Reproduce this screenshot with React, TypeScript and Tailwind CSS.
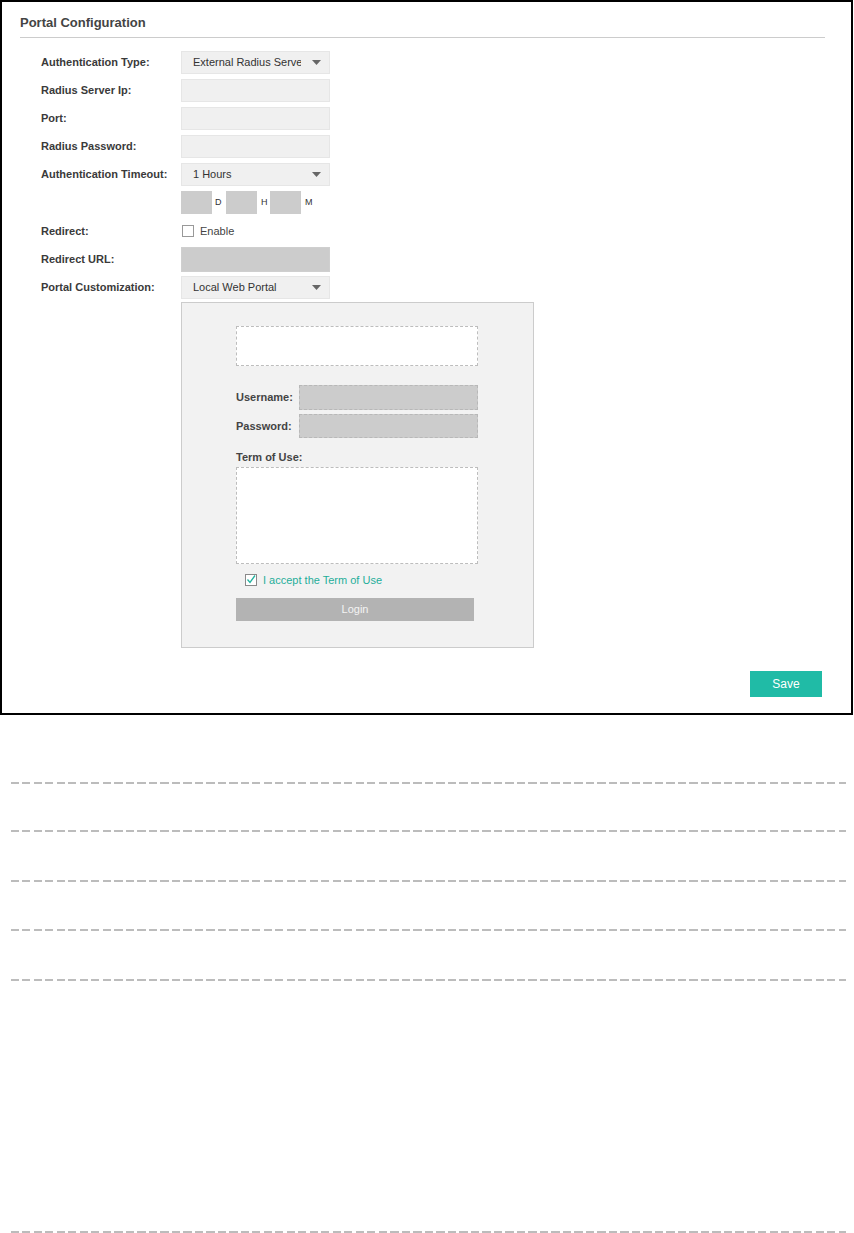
import React from 'react'

const font = { fontFamily: '"Liberation Sans", Arial, sans-serif' }

const Arrow = () => (
  <svg width="9" height="5" viewBox="0 0 9 5" className="shrink-0 ml-auto">
    <path d="M0 0h9L4.5 5z" fill="#666" />
  </svg>
)

const Row = ({ label, children, className = '' }: { label: string; children?: React.ReactNode; className?: string }) => (
  <div className={`flex items-center ${className}`}>
    <div className="w-[140px] text-[11px] font-bold text-[#3a3a3a]">{label}</div>
    {children}
  </div>
)

const Select = ({ value }: { value: string }) => (
  <div className="w-[149px] h-[23px] bg-[#f0f0f0] border border-[#e6e6e6] flex items-center pl-[11px] pr-[8px] text-[11px] text-[#333]">
    <span className="w-[108px] overflow-hidden whitespace-nowrap">{value}</span>
    <Arrow />
  </div>
)

const Input = ({ dark }: { dark?: boolean }) => (
  <div className={`w-[149px] border ${dark ? 'bg-[#cccccc] border-[#cfcfcf] h-[25px]' : 'bg-[#f0f0f0] border-[#e6e6e6] h-[23px]'}`} />
)

const Dashed = ({ className = '' }: { className?: string }) => (
  <div className={`h-[2px] ml-[11px] w-[835px] bg-[repeating-linear-gradient(90deg,#bcbcbc_0_8px,transparent_8px_11.5px)] ${className}`} />
)

export default function App() {
  return (
    <div className="w-[854px] h-[1233px] bg-white" style={font}>
      <div className="w-[853px] h-[715px] border-2 border-black px-[18px] pt-[13px] relative">
        <div className="text-[13px] font-bold text-[#444] leading-[16px] pb-[6px] border-b border-[#cccccc] w-[805px]">Portal Configuration</div>

        <div className="pl-[21px] mt-[13px] flex flex-col">
          <Row label="Authentication Type:"><Select value="External Radius Server" /></Row>
          <Row label="Radius Server Ip:" className="mt-[5px]"><Input /></Row>
          <Row label="Port:" className="mt-[5px]"><Input /></Row>
          <Row label="Radius Password:" className="mt-[5px]"><Input /></Row>
          <Row label="Authentication Timeout:" className="mt-[5px]"><Select value="1 Hours" /></Row>
          <div className="flex items-center mt-[5px] pl-[140px] text-[9px] text-[#333]">
            <div className="w-[31px] h-[23px] bg-[#cccccc]" />
            <span className="w-[14px] pl-[3px]">D</span>
            <div className="w-[31px] h-[23px] bg-[#cccccc]" />
            <span className="w-[13px] pl-[4px]">H</span>
            <div className="w-[31px] h-[23px] bg-[#cccccc]" />
            <span className="pl-[4px]">M</span>
          </div>
          <Row label="Redirect:" className="mt-[10px] h-[14px]">
            <div className="ml-[1px] w-[12px] h-[12px] border border-[#999] bg-white" />
            <span className="ml-[6px] text-[11px] text-[#444]">Enable</span>
          </Row>
          <Row label="Redirect URL:" className="mt-[9px]"><Input dark /></Row>
          <Row label="Portal Customization:" className="mt-[4px]"><Select value="Local Web Portal" /></Row>

          <div className="ml-[140px] mt-[3px] w-[353px] h-[346px] bg-[#f2f2f2] border border-[#cccccc] pl-[54px] pt-[23px]">
            <div className="w-[242px] h-[40px] bg-white border border-dashed border-[#bdbdbd]" />
            <div className="mt-[19px] flex items-center">
              <span className="w-[63px] text-[11px] font-bold text-[#444]">Username:</span>
              <div className="w-[179px] h-[25px] bg-[#cccccc] border border-dashed border-[#b8b8b8]" />
            </div>
            <div className="mt-[4px] flex items-center">
              <span className="w-[63px] text-[11px] font-bold text-[#444]">Password:</span>
              <div className="w-[179px] h-[24px] bg-[#cccccc] border border-dashed border-[#b8b8b8]" />
            </div>
            <div className="mt-[13px] text-[11px] font-bold text-[#444] leading-[13px]">Term of Use:</div>
            <div className="mt-[3px] w-[242px] h-[97px] bg-white border border-dashed border-[#bdbdbd]" />
            <div className="mt-[8px] ml-[9px] flex items-center">
              <svg width="12" height="12" viewBox="0 0 12 12">
                <rect x="0.5" y="0.5" width="11" height="11" fill="white" stroke="#8a8a8a" />
                <path d="M2.5 5.5l2.5 3L10 1.5" fill="none" stroke="#22b3a0" strokeWidth="1.3" />
              </svg>
              <span className="ml-[6px] text-[11px] text-[#1fae9a]">I accept the Term of Use</span>
            </div>
            <div className="mt-[9px] w-[238px] h-[23px] bg-[#b3b3b3] flex items-center justify-center text-[11px] text-[#f4f4f4]">Login</div>
          </div>
        </div>

        <div className="absolute left-[748px] top-[669px] w-[72px] h-[26px] bg-[#20bba6] flex items-center justify-center text-[12px] text-white">Save</div>
      </div>

      <Dashed className="mt-[67px]" />
      <Dashed className="mt-[46px]" />
      <Dashed className="mt-[48px]" />
      <Dashed className="mt-[47px]" />
      <Dashed className="mt-[48px]" />
      <Dashed className="mt-[250px]" />
    </div>
  )
}
